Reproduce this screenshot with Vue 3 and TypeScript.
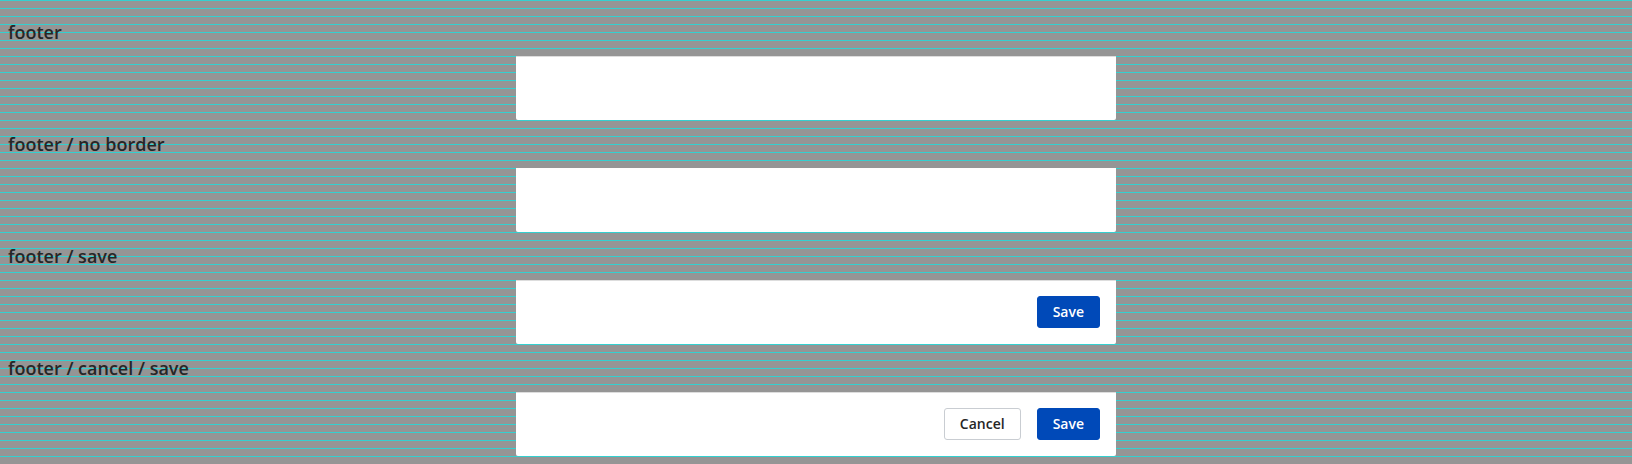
<script setup lang="ts">
interface FooterExample {
  title: string
  bordered: boolean
  actions: { label: string; primary: boolean }[]
}

const cancel = { label: 'Cancel', primary: false }
const save = { label: 'Save', primary: true }

const examples: FooterExample[] = [
  { title: 'footer', bordered: true, actions: [] },
  { title: 'footer / no border', bordered: false, actions: [] },
  { title: 'footer / save', bordered: true, actions: [save] },
  { title: 'footer / cancel / save', bordered: true, actions: [cancel, save] },
]
</script>

<template>
  <main class="page">
    <section v-for="example in examples" :key="example.title" class="example">
      <h3 class="title">{{ example.title }}</h3>
      <footer class="footer" :class="{ bordered: example.bordered }">
        <button
          v-for="action in example.actions"
          :key="action.label"
          type="button"
          class="button"
          :class="{ primary: action.primary }"
        >{{ action.label }}</button>
      </footer>
    </section>
  </main>
</template>

<style>
body {
  margin: 0;
}
</style>

<style scoped>
.page {
  box-sizing: border-box;
  height: 464px;
  padding: 16px 8px 8px;
  background: linear-gradient(to bottom, #33d0d0 1px, #959595 1px) 0 0 / 100% 8px;
  font-family: "Open Sans", sans-serif;
  color: #262626;
}

.example {
  height: 112px;
}

.title {
  margin: 0 0 8px;
  font-size: 18px;
  font-weight: 600;
  line-height: 32px;
}

.footer {
  box-sizing: border-box;
  display: flex;
  justify-content: flex-end;
  align-items: center;
  gap: 16px;
  width: 600px;
  height: 64px;
  margin: 0 auto;
  padding: 0 16px;
  background: #fff;
  border-radius: 0 0 2px 2px;
}

.footer.bordered {
  padding-bottom: 1px;
  border-top: 1px solid #ddd;
}

.button {
  box-sizing: border-box;
  height: 32px;
  padding: 0 15px;
  border: 1px solid #c9cdd2;
  border-radius: 3px;
  background: #fff;
  color: #262626;
  font: 600 14px/30px "Open Sans", sans-serif;
}

.button.primary {
  border-color: #0049b8;
  background: #0049b8;
  color: #fff;
}
</style>
